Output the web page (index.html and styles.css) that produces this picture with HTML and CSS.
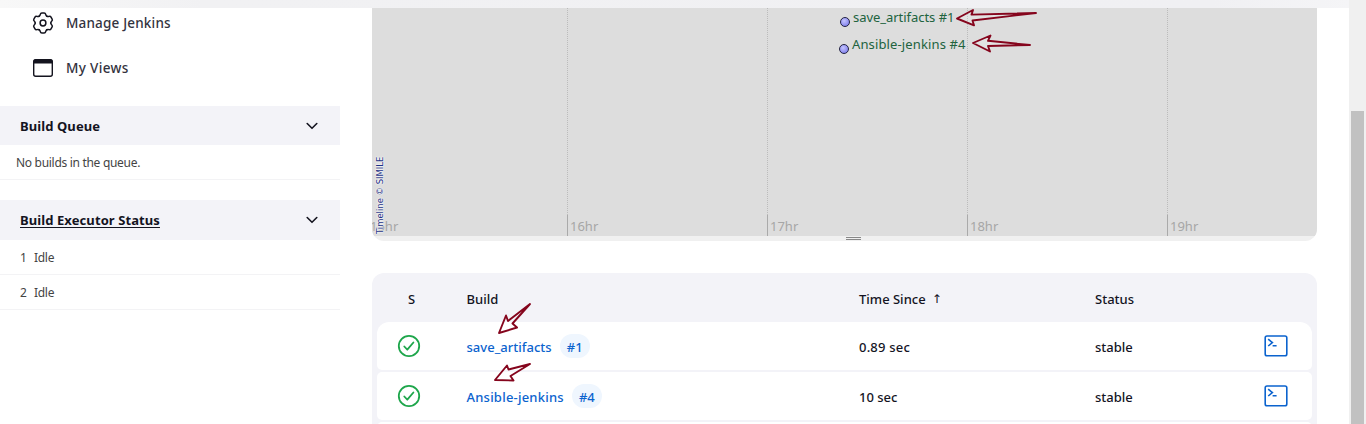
FILE: index.html
```html
<!DOCTYPE html>
<html lang="en">
<head>
<meta charset="utf-8">
<title>Build History - Jenkins</title>
<link rel="stylesheet" href="styles.css">
</head>
<body>
<div class="viewport">
  <div class="page">
    <div class="topbar"></div>
    <div class="columns">
      <aside class="sidebar">
        <nav class="tasks">
          <a class="task"><svg class="task-icon" viewBox="0 0 24 24" fill="none" stroke="currentColor" stroke-width="1.5" stroke-linecap="round"><defs><path id="lobe" d="M8.1 5.25C8.9 4.8 9.1 4.3 9.3 3.400Q9.6 2.1 10.9 2.100H13.1Q14.4 2.1 14.7 3.400C14.9 4.3 15.1 4.8 15.9 5.250"/></defs><use href="#lobe"/><use href="#lobe" transform="rotate(60 12 12)"/><use href="#lobe" transform="rotate(120 12 12)"/><use href="#lobe" transform="rotate(180 12 12)"/><use href="#lobe" transform="rotate(240 12 12)"/><use href="#lobe" transform="rotate(300 12 12)"/><circle cx="12" cy="12" r="2.900"/></svg><span class="task-label manage">Manage Jenkins</span></a>
          <a class="task"><svg class="task-icon" viewBox="0 0 24 24"><rect x="2.7" y="3.7" width="18.6" height="16.6" rx="2" fill="none" stroke="currentColor" stroke-width="1.4"/><path d="M2.5 7.5V5.2q0-2 2-2h15q2 0 2 2v2.3z" fill="currentColor"/></svg><span class="task-label views">My Views</span></a>
        </nav>
        <section class="pane">
          <header class="pane-head queue-head"><span class="queue-title">Build Queue</span><svg class="chevron" viewBox="0 0 12 8"><path d="M1.2 1.5 6 6.3l4.8-4.8"/></svg></header>
          <div class="queue-empty"><span>No builds in the queue.</span></div>
        </section>
        <section class="pane">
          <header class="pane-head"><a class="exec-title">Build Executor Status</a><svg class="chevron" viewBox="0 0 12 8"><path d="M1.2 1.5 6 6.3l4.8-4.8"/></svg></header>
          <div class="executor"><span class="num">1</span><span class="idle">Idle</span></div>
          <div class="executor"><span class="num">2</span><span class="idle">Idle</span></div>
        </section>
      </aside>
      <main class="main">
        <section class="timeline">
          <div class="band">
            <div class="hour first"><span>15hr</span></div>
            <div class="hour"><span>16hr</span></div>
            <div class="hour"><span>17hr</span></div>
            <div class="hour"><span>18hr</span></div>
            <div class="hour last"><span>19hr</span></div>
            <div class="event event-save"><i class="dot"></i><span>save_artifacts #1</span></div>
            <div class="event event-ansible"><i class="dot"></i><span>Ansible-jenkins #4</span></div>
            <div class="copyright">Timeline © SIMILE</div>
          </div>
          <div class="resizer"><i class="grip"></i></div>
        </section>
        <section class="builds">
          <div class="row head"><span class="c-s">S</span><span class="c-build">Build</span><span class="c-time"><span>Time Since</span><span class="sort">↑</span></span><span>Status</span></div>
          <div class="row item top">
            <span class="c-s"><svg class="ok" viewBox="0 0 24 24"><circle cx="12" cy="12" r="10.2"/><path d="m7.3 12.5 3 3.2 6.1-7.2"/></svg></span>
            <span class="c-build"><a class="link">save_artifacts</a><a class="badge">#1</a></span>
            <span class="cell seconds">0.89 sec</span><span class="cell">stable</span>
            <svg class="console" viewBox="0 0 24 24"><rect x="1.2" y="2" width="21.6" height="19.8" rx="1.8"/><path d="m4.2 5.2 4.2 3.4-4.2 3.4M8.6 11.7h4"/></svg>
          </div>
          <div class="row item">
            <span class="c-s"><svg class="ok" viewBox="0 0 24 24"><circle cx="12" cy="12" r="10.2"/><path d="m7.3 12.5 3 3.2 6.1-7.2"/></svg></span>
            <span class="c-build"><a class="link wide">Ansible-jenkins</a><a class="badge">#4</a></span>
            <span class="cell">10 sec</span><span class="cell">stable</span>
            <svg class="console" viewBox="0 0 24 24"><rect x="1.2" y="2" width="21.6" height="19.8" rx="1.8"/><path d="m4.2 5.2 4.2 3.4-4.2 3.4M8.6 11.7h4"/></svg>
          </div>
          <div class="row item"></div>
        </section>
      </main>
    </div>
  </div>
  <div class="scrollbar"><div class="thumb"></div></div>
  <svg class="arrows" viewBox="0 0 1366 424">
    <path d="M957 18.5 973 10 971.5 14.6 1036 13 972.5 20.5 974 25.3Z"/>
    <path d="M973 43 990.5 35.5 988 40.8 1030 45 988 46 990 51.5Z"/>
    <path d="M499 333 506 315.5 508 321 530 304 512.5 323.5 517 327.5Z"/>
    <path d="M495 380 507 365.5 508.5 369.5 530 364 510.500 376 513.5 380.500Z"/>
  </svg>
</div>
</body>
</html>
```
FILE: styles.css
```css
* { box-sizing: border-box; }
body { margin: 0; background: #fff; font-family: "Noto Sans", "Open Sans", sans-serif; font-size: 13px; color: #14141f; }
.viewport { position: relative; display: flex; width: 1366px; height: 424px; overflow: hidden; }
.page { flex: 1; display: flex; flex-direction: column; }
.topbar { height: 8px; flex: none; background: linear-gradient(90deg, #f8f8f8, #f1f1f3 15%, #f0f0f3 90%, #f5f5f7); }
.columns { display: flex; white-space: nowrap; }
.sidebar { width: 340px; flex: none; }
.tasks { display: flex; flex-direction: column; height: 98px; }
.task { display: flex; align-items: center; gap: 11px; height: 45px; padding-left: 31px; }
.task:first-child { height: 37px; padding-bottom: 7px; }
.task-icon { width: 24px; height: 24px; }
.task-label { font-size: 13.5px; font-weight: 500; color: #333340; }
.manage { letter-spacing: .18px; }
.views { letter-spacing: .35px; }
.pane { margin-bottom: 20px; }
.pane-head { display: flex; align-items: center; justify-content: space-between; height: 40px; padding: 0 22px 0 20px; background: #f3f3f8; font-size: 13px; font-weight: 700; letter-spacing: .09px; }
.queue-head { height: 39px; }
.exec-title { text-decoration: underline; text-underline-offset: 2px; }
.chevron { width: 12px; height: 8px; fill: none; stroke: #14141f; stroke-width: 1.6; stroke-linecap: round; stroke-linejoin: round; }
.queue-empty, .executor { display: flex; align-items: center; height: 35px; border-bottom: 1px solid #f3f3f5; font-size: 12px; color: #444; letter-spacing: -.3px; }
.queue-empty { padding-left: 16px; }
.executor { padding: 1px 0 0 20px; gap: 7px; }
.num { width: 7px; }
.main { width: 945px; margin-left: 32px; }
.timeline { height: 233px; overflow: hidden; border-radius: 0 0 12px 12px; background: #f0f0f0; }
.band { position: relative; display: flex; height: 228px; background: #ddd; overflow: hidden; }
.hour { width: 200px; flex: none; display: flex; align-items: flex-end; height: 228px; padding-left: 3px; font-size: 13px; line-height: 20px; color: #a6a6a6; background: linear-gradient(#aaa, #aaa) 0 100% / 1px 21px no-repeat, repeating-linear-gradient(#bbb 0 1px, transparent 1px 2px) 0 0 / 1px 100% no-repeat; }
.hour.first { width: 195px; background: none; padding-left: 0; }
.hour.first span { margin-left: -2px; }
.event { position: absolute; display: flex; align-items: center; gap: 3px; height: 20px; font-size: 13px; color: #21633e; }
.event-save { left: 468px; top: -1px; letter-spacing: -.04px; }
.event-ansible { left: 467px; top: 26px; letter-spacing: .13px; }
.dot { width: 10px; height: 10px; margin-top: 9px; border: 1px solid #222244; border-radius: 50%; background: radial-gradient(circle at 40% 35%, #c4c4ff, #8585ed 75%); }
.copyright { position: absolute; left: 1px; bottom: 2px; width: 13px; height: 78px; writing-mode: vertical-rl; text-orientation: sideways; transform: rotate(180deg); font-family: "DejaVu Sans Condensed", "DejaVu Sans", sans-serif; font-stretch: condensed; font-size: 9.4px; line-height: 13px; color: #1d3285; text-shadow: 0 0 2px #fff, 0 0 2px #fff, 0 0 1px #fff; }
.resizer { display: flex; justify-content: center; height: 5px; padding-top: 1px; padding-left: 18px; }
.grip { width: 15px; height: 3px; border-top: 1px solid #888; border-bottom: 1px solid #888; }
.builds { display: flex; flex-direction: column; gap: 2px; height: 200px; margin-top: 32px; padding: 0 5px; border-radius: 12px 12px 0 0; background: #f3f3f8; }
.row { display: grid; grid-template-columns: 89.5px 392.5px 236px 169px 48px; align-items: center; height: 48px; flex: none; font-size: 13px; font-weight: 500; }
.head { height: 47px; padding-top: 5px; color: #14141f; }
.item { border-radius: 5px; background: #fff; color: #14141f; }
.item.top { border-radius: 12px 12px 5px 5px; }
.c-s { display: flex; padding-left: 20px; }
.head .c-s { padding-left: 31px; }
.ok { width: 24px; height: 24px; fill: none; stroke: #1ea64b; stroke-width: 1.8; stroke-linecap: round; stroke-linejoin: round; }
.c-build { display: flex; align-items: center; }
.link { padding-top: 2px; color: #0b63ce; letter-spacing: .02px; }
.wide { letter-spacing: .22px; }
.badge { display: flex; align-items: center; justify-content: center; width: 30px; height: 24px; margin-left: 8px; padding-top: 1px; border-radius: 12px; background: #eff6fe; color: #0b63ce; }
.cell { padding-top: 2px; }
.seconds { letter-spacing: .2px; }
.c-time { display: flex; align-items: center; gap: 6px; }
.sort { font-size: 12px; font-family: "DejaVu Sans", sans-serif; }
.console { width: 24px; height: 24px; fill: none; stroke: #0b63ce; stroke-width: 1.6; }
.scrollbar { width: 17px; padding: 111px 2px 0; background: #f0f0f0; }
.thumb { height: 313px; background: #c1c1c1; }
.arrows { position: absolute; left: 0; top: 0; width: 1366px; height: 424px; fill: #fff; fill-opacity: .15; stroke: #85051d; stroke-width: 1.9; stroke-linejoin: round; }
```
